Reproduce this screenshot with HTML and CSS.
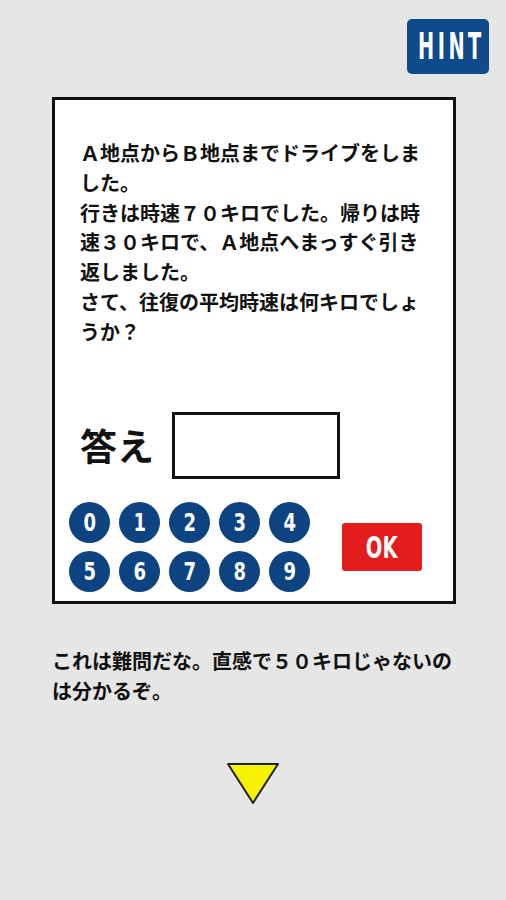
FILE: index.html
```html
<!DOCTYPE html>
<html lang="ja">
<head>
  <meta charset="UTF-8" />
  <meta name="viewport" content="width=device-width, initial-scale=1.0"/>
  <title>クイズ</title>
  <link rel="stylesheet" href="styles.css">
</head>
<body>
  <div class="top-bar">
    <button class="btn-hint"><span>HINT</span></button>
  </div>

  <div class="quiz-card">
    <p class="question">Ａ地点からＢ地点までドライブをしました。<br>行きは時速７０キロでした。帰りは時速３０キロで、Ａ地点へまっすぐ引き返しました。<br>さて、往復の平均時速は何キロでしょうか？</p>

    <div class="answer-row">
      <span class="answer-label">答え</span>
      <div class="answer-box" id="answerBox"></div>
    </div>

    <div class="input-row">
      <div class="keypad">
        <button class="key"><span>0</span></button>
        <button class="key"><span>1</span></button>
        <button class="key"><span>2</span></button>
        <button class="key"><span>3</span></button>
        <button class="key"><span>4</span></button>
        <button class="key"><span>5</span></button>
        <button class="key"><span>6</span></button>
        <button class="key"><span>7</span></button>
        <button class="key"><span>8</span></button>
        <button class="key"><span>9</span></button>
      </div>
      <button class="btn-ok"><span>OK</span></button>
    </div>
  </div>

  <p class="comment">これは難問だな。直感で５０キロじゃないのは分かるぞ。</p>

  <div class="next">
    <svg width="56" height="46" viewBox="0 0 56 46">
      <polygon points="3,3 53,3 28,42" fill="#f6f200" stroke="#222" stroke-width="2" stroke-linejoin="round"/>
    </svg>
  </div>
</body>
</html>
```

FILE: styles.css
```css
body {
  margin: 0;
  background: #e6e6e6;
  font-family: "Noto Sans CJK JP", "DejaVu Sans", sans-serif;
  color: #111;
}

button {
  border: none;
  padding: 0;
  cursor: pointer;
  font-family: "DejaVu Sans Condensed", "DejaVu Sans", sans-serif;
  font-weight: bold;
  color: #fff;
}

.top-bar {
  display: flex;
  justify-content: flex-end;
  padding: 19px 17px 0 0;
}

.btn-hint {
  width: 82px;
  height: 55px;
  background: #0f4a8a;
  border-radius: 5px;
  font-size: 37px;
  display: flex;
  align-items: center;
  justify-content: center;
}

.btn-hint span {
  display: inline-block;
  transform: scaleX(0.58);
  letter-spacing: 6px;
  margin-right: -6px;
}

.quiz-card {
  width: 398px;
  margin: 23px 0 0 52px;
  background: #fff;
  border: 3px solid #111;
  padding: 38px 0 9px 0;
}

.question {
  margin: 0;
  width: 340px;
  padding-left: 25px;
  font-size: 20px;
  font-weight: bold;
  line-height: 29.8px;
}

.answer-row {
  display: flex;
  align-items: center;
  gap: 18px;
  margin-top: 65px;
  padding-left: 25px;
}

.answer-label {
  font-size: 37px;
  font-weight: bold;
  line-height: 1;
}

.answer-box {
  width: 162px;
  height: 61px;
  border: 3px solid #111;
  background: #fff;
}

.input-row {
  display: flex;
  align-items: center;
  gap: 32px;
  margin-top: 23px;
  padding-left: 14px;
}

.keypad {
  display: grid;
  grid-template-columns: repeat(5, 41px);
  column-gap: 9px;
  row-gap: 8px;
}

.key {
  width: 41px;
  height: 41px;
  border-radius: 50%;
  background: #0d4381;
  font-size: 25px;
  display: flex;
  align-items: center;
  justify-content: center;
}

.key span {
  display: inline-block;
  transform: scaleX(0.8);
}

.btn-ok {
  width: 80px;
  height: 48px;
  background: #e21d1b;
  border-radius: 3px;
  font-size: 31px;
  display: flex;
  align-items: center;
  justify-content: center;
}

.btn-ok span {
  display: inline-block;
  transform: scaleX(0.7);
}

.comment {
  width: 404px;
  margin: 42px 0 0 52px;
  font-size: 20px;
  font-weight: bold;
  line-height: 30px;
}

.next {
  display: flex;
  justify-content: center;
  margin-top: 55px;
}
```
